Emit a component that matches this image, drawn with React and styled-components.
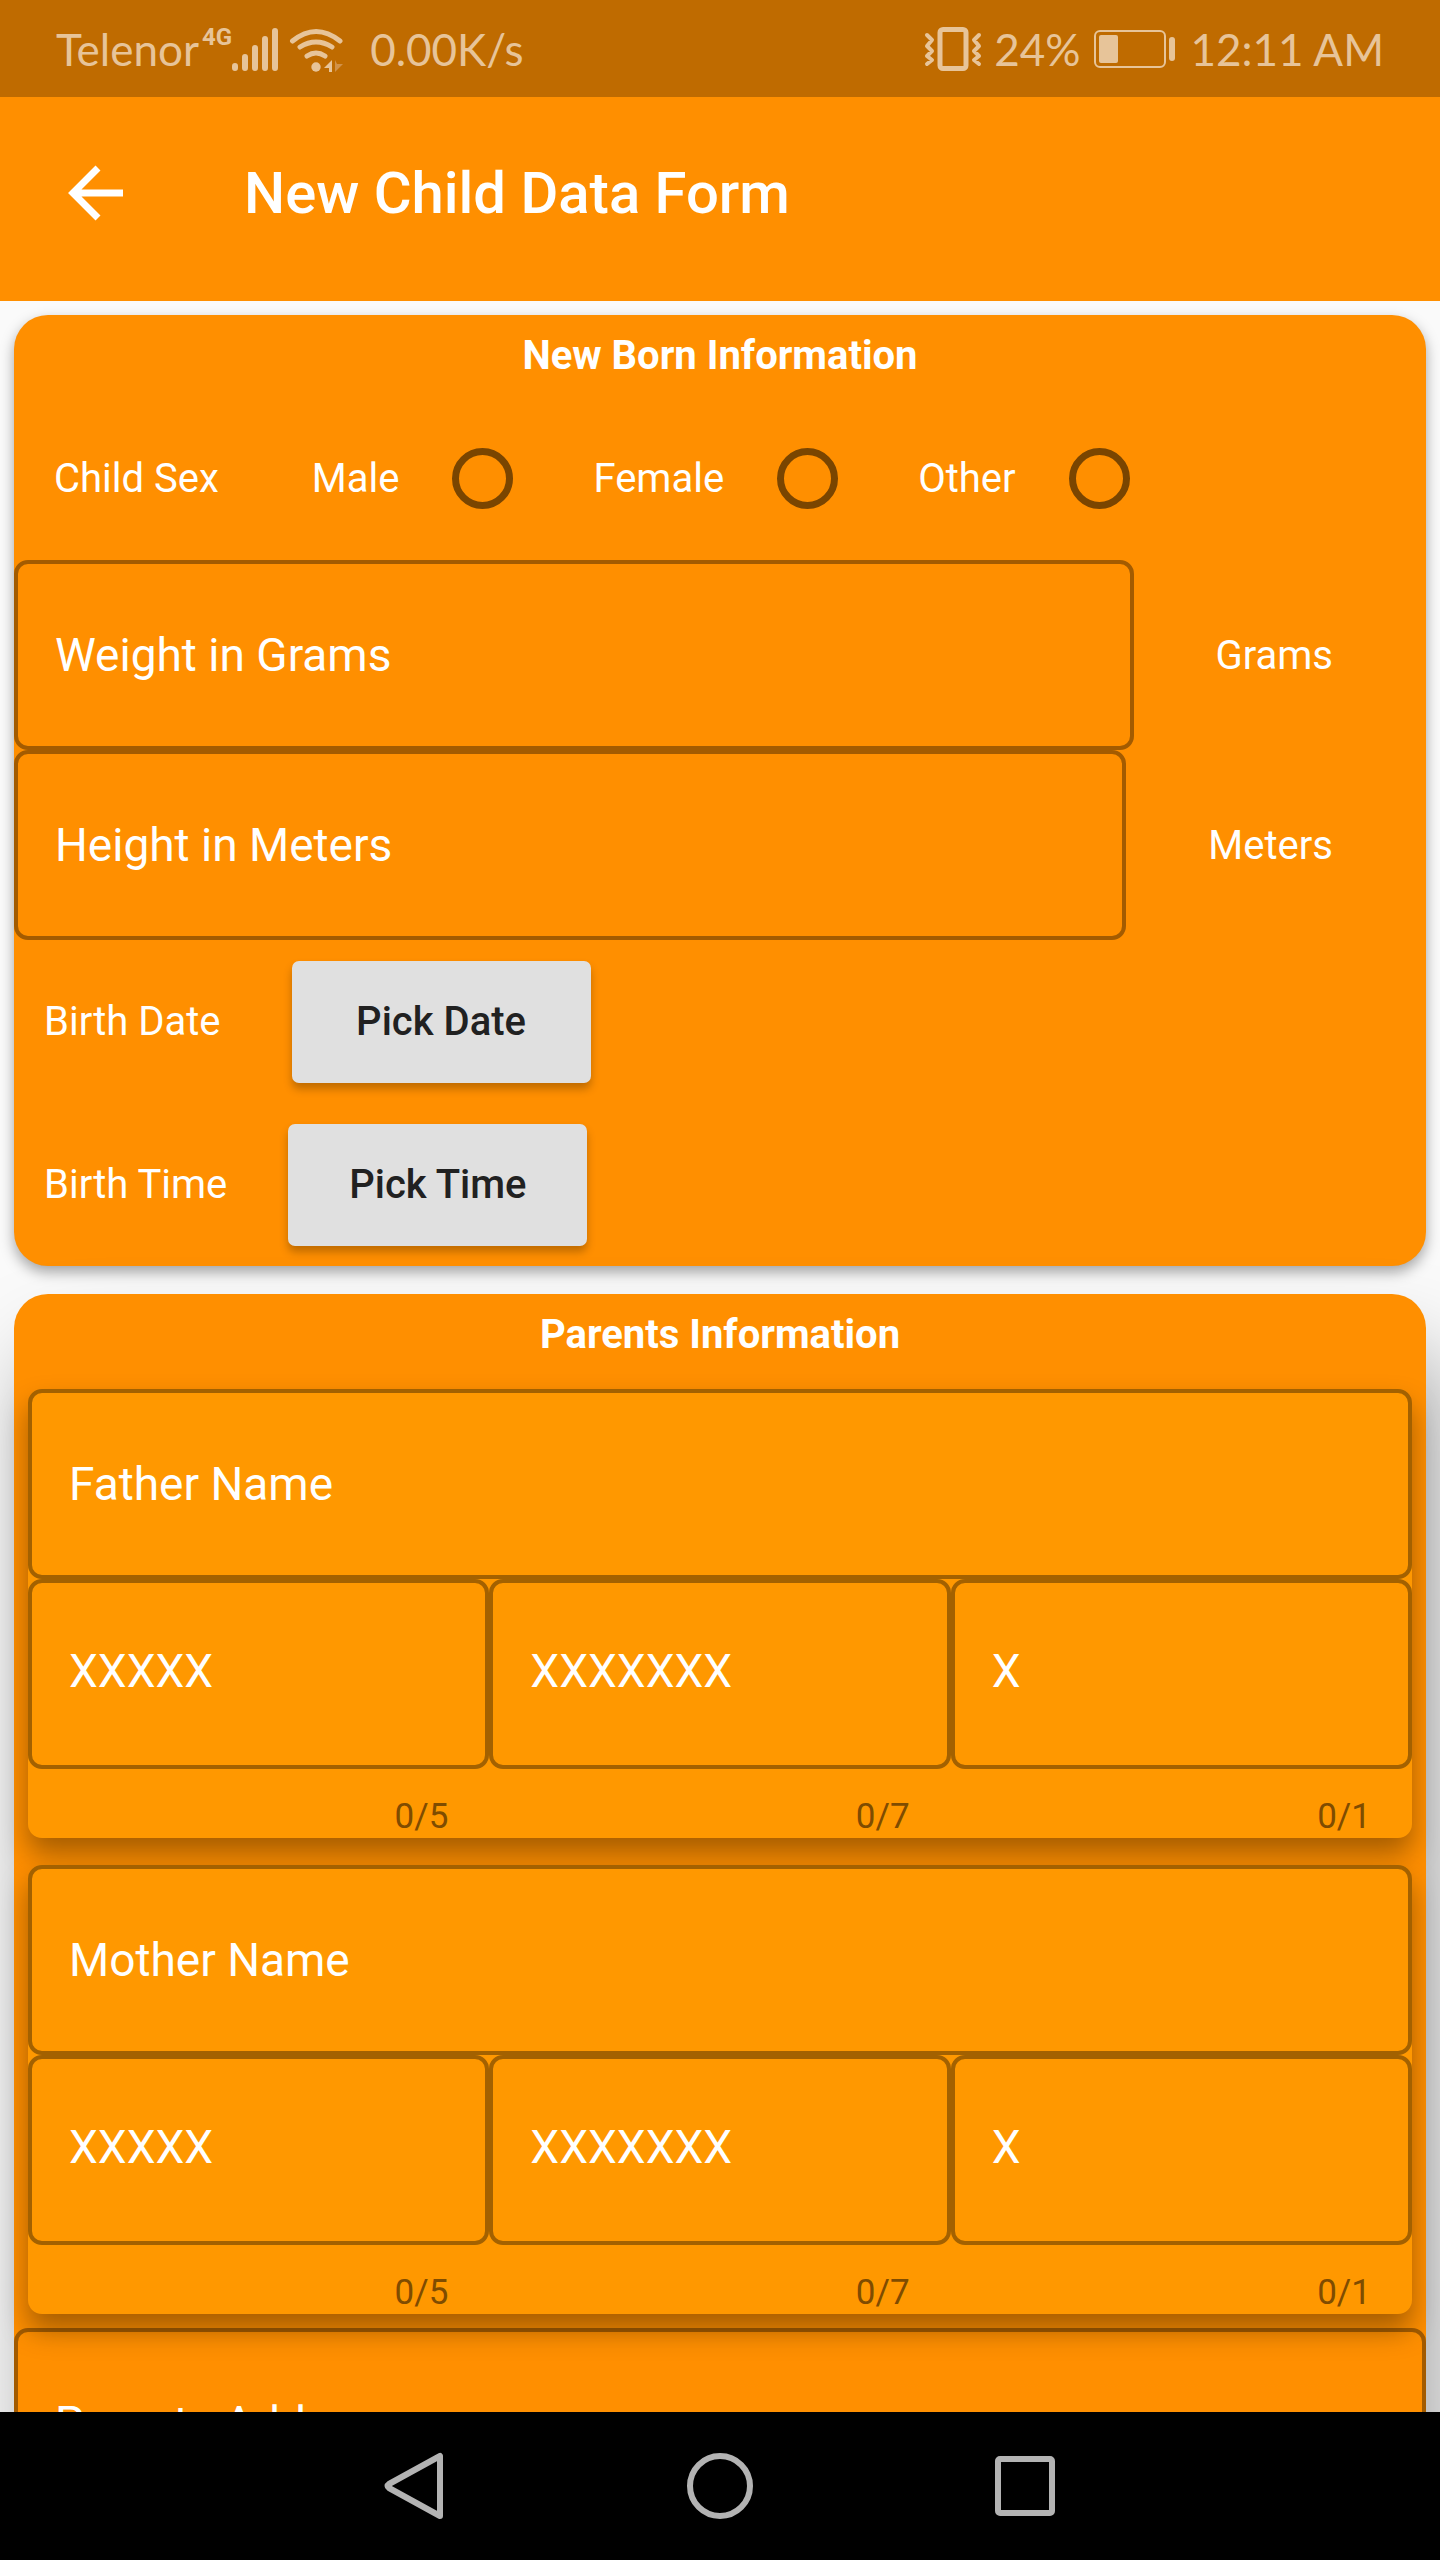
import React from "react"
import styled, { createGlobalStyle } from "styled-components"

const orange = "#ff8f00"
const lightOrange = "#ff9800"

const GlobalStyle = createGlobalStyle`
  * {
    box-sizing: border-box;
  }

  body {
    margin: 0;
    background: #fafafa;
    font-family: Roboto, "Noto Sans", sans-serif;
    color: #fff;
  }
`

const Screen = styled.div`
  height: 100vh;
  display: flex;
  flex-direction: column;
  overflow: hidden;
`

const StatusBar = styled.div`
  height: 97px;
  flex-shrink: 0;
  padding: 0 56px;
  display: flex;
  align-items: center;
  justify-content: space-between;
  background: #bf6b00;
  color: #e7c499;
  font-family: Lato, sans-serif;
  font-size: 44px;
  line-height: 60px;
`

const StatusGroup = styled.div`
  display: flex;
  align-items: center;
`

const StatusIcon = styled.svg`
  display: block;
  margin-left: ${({ $gap }) => $gap || 0}px;
`

const StatusText = styled.span`
  margin-left: ${({ $gap }) => $gap || 0}px;
`

const NetworkType = styled.span`
  align-self: flex-start;
  margin-left: 3px;
  font-family: "Liberation Sans Narrow", Roboto, sans-serif;
  font-size: 24px;
  line-height: 36px;
  font-weight: 700;
`

const AppBar = styled.header`
  height: 204px;
  flex-shrink: 0;
  padding: 0 60px 12px;
  display: flex;
  align-items: center;
  gap: 112px;
  background: ${orange};
`

const BackButton = styled.button`
  padding: 0;
  border: none;
  background: none;
  color: #fff;
`

const PageTitle = styled.h1`
  margin: 0;
  font-size: 58px;
  line-height: 68px;
  font-weight: 500;
`

const Form = styled.form`
  flex: 1;
  min-height: 0;
  overflow: hidden;
  padding: 14px;
  display: flex;
  flex-direction: column;
  gap: 28px;
`

const Card = styled.section`
  flex-shrink: 0;
  border-radius: 34px;
  background: ${orange};
  box-shadow: ${({ $raised }) =>
    $raised
      ? "16px 60px 88px rgba(0, 0, 0, 0.34)"
      : "0 6px 14px rgba(0, 0, 0, 0.35)"};
`

const CardTitle = styled.h2`
  margin: 0;
  padding: 17px 0;
  font-size: 40px;
  line-height: 47px;
  font-weight: 700;
  text-align: center;
`

const RadioRow = styled.div`
  height: 164px;
  padding-left: 40px;
  display: flex;
  align-items: center;
  gap: 27px;
  font-size: 40px;
`

const RowLabel = styled.span`
  margin-right: 66px;
`

const RadioLabel = styled.label`
  display: flex;
  align-items: center;
`

const Radio = styled.input`
  appearance: none;
  width: 61px;
  height: 61px;
  margin: 0 53px;
  border: 7px solid #7a4500;
  border-radius: 50%;
`

const UnitRow = styled.label`
  display: flex;
  align-items: center;
  font-size: 40px;
`

const Unit = styled.span`
  padding: 0 93px 0 82px;
`

const Field = styled.input`
  display: block;
  flex: 1;
  width: 100%;
  min-width: 0;
  height: 190px;
  padding: 0 37px;
  border: 4px solid rgba(0, 0, 0, 0.36);
  border-radius: 14px;
  background: none;
  color: #fff;
  font-family: inherit;
  font-size: 46px;

  &::placeholder {
    color: #fff;
    opacity: 1;
  }
`

const IdField = styled(Field)`
  padding-bottom: 6px;
`

const PickRow = styled.div`
  height: 163px;
  padding-left: 30px;
  display: flex;
  align-items: center;
  gap: ${({ $gap }) => $gap}px;
  font-size: 40px;
`

const PickButton = styled.button`
  width: 299px;
  height: 122px;
  border: none;
  border-radius: 7px;
  background: #e0e0e0;
  box-shadow: 0 6px 8px rgba(0, 0, 0, 0.25);
  color: #212121;
  font-family: inherit;
  font-size: 40px;
  font-weight: 500;
`

const ParentCard = styled.div`
  margin: 0 14px 27px;
  border-radius: 14px;
  background: ${lightOrange};
  box-shadow: 0 16px 28px rgba(0, 0, 0, 0.35);

  &:first-of-type {
    margin-top: 14px;
  }

  &:last-of-type {
    margin-bottom: 14px;
  }
`

const IdRow = styled.div`
  display: grid;
  grid-template-columns: repeat(3, 1fr);
`

const Counter = styled.div`
  height: 69px;
  padding: 27px 41px 0;
  color: #7f4c00;
  font-size: 35px;
  line-height: 41px;
  text-align: right;
`

const NavBar = styled.nav`
  height: 148px;
  flex-shrink: 0;
  display: flex;
  align-items: center;
  justify-content: center;
  gap: 235px;
  background: #000;
`

const NavButton = styled.button`
  width: 70px;
  height: 70px;
  padding: 0;
  border: none;
  background: none;
`

const idParts = ["XXXXX", "XXXXXXX", "X"]

const SignalIcon = () => (
  <StatusIcon width="46" height="46" viewBox="1 0 46 46">
    <path
      d="M4 40v2M14 31v11M24 22v20M34 13v29M44 5v37"
      stroke="#e7c499"
      strokeWidth="6"
      strokeLinecap="round"
    />
  </StatusIcon>
)

const WifiIcon = () => (
  <StatusIcon $gap={11} width="56" height="46" viewBox="0 0 56 46">
    <g fill="none" stroke="#e7c499" strokeWidth="5" strokeLinecap="round">
      <path d="M3.5 15Q27-4 51 15M11 21Q27 11 43 21M18 30Q27 24 36 30" />
    </g>
    <circle cx="27" cy="41" r="4.7" fill="#e7c499" />
    <path d="M35 42l8-8v12h-3v-4z" fill="#e7c499" />
    <path d="M54 38l-8 8V34l2 4z" fill="#d1924a" />
  </StatusIcon>
)

const VibrateIcon = () => (
  <StatusIcon width="58" height="48" viewBox="0 0 58 48">
    <g fill="none" stroke="#e7c499">
      <rect x="16" y="4.5" width="26" height="39" rx="3" strokeWidth="5" />
      <path
        d="M3 10l5 5-5 6 5 5-5 5 5 4-5 4M55 10l-5 5 5 6-5 5 5 5-5 4 5 4"
        strokeWidth="4"
        strokeLinejoin="round"
        strokeLinecap="round"
      />
    </g>
  </StatusIcon>
)

const BatteryIcon = () => (
  <StatusIcon $gap={14} width="82" height="38" viewBox="0 0 82 38">
    <rect
      x="1"
      y="1"
      width="70"
      height="36"
      rx="5"
      fill="none"
      stroke="#e7c499"
      strokeWidth="2"
    />
    <rect x="5" y="5" width="19" height="28" rx="2" fill="#e7c499" />
    <rect x="75" y="7" width="6" height="24" rx="3" fill="#e7c499" />
  </StatusIcon>
)

const Parent = ({ name }) => (
  <ParentCard>
    <Field aria-label={name} placeholder={name} />
    <IdRow>
      {idParts.map(part => (
        <div key={part}>
          <IdField
            aria-label={`${name} ID ${part}`}
            placeholder={part}
            maxLength={part.length}
          />
          <Counter>0/{part.length}</Counter>
        </div>
      ))}
    </IdRow>
  </ParentCard>
)

const App = () => (
  <Screen>
    <GlobalStyle />
    <StatusBar>
      <StatusGroup>
        <StatusText>Telenor</StatusText>
        <NetworkType>4G</NetworkType>
        <SignalIcon />
        <WifiIcon />
        <StatusText $gap={25}>0.00K/s</StatusText>
      </StatusGroup>
      <StatusGroup>
        <VibrateIcon />
        <StatusText $gap={12}>24%</StatusText>
        <BatteryIcon />
        <StatusText $gap={14}>12:11 AM</StatusText>
      </StatusGroup>
    </StatusBar>

    <AppBar>
      <BackButton aria-label="Back">
        <svg width="72" height="72" viewBox="0 0 72 72" display="block">
          <path
            d="M63 36H14M38 11L13 36L38 61"
            fill="none"
            stroke="currentColor"
            strokeWidth="7"
          />
        </svg>
      </BackButton>
      <PageTitle>New Child Data Form</PageTitle>
    </AppBar>

    <Form>
      <Card>
        <CardTitle>New Born Information</CardTitle>
        <RadioRow role="radiogroup" aria-labelledby="child-sex">
          <RowLabel id="child-sex">Child Sex</RowLabel>
          {["Male", "Female", "Other"].map(sex => (
            <RadioLabel key={sex}>
              {sex}
              <Radio type="radio" name="sex" value={sex} />
            </RadioLabel>
          ))}
        </RadioRow>
        <UnitRow>
          <Field placeholder="Weight in Grams" />
          <Unit>Grams</Unit>
        </UnitRow>
        <UnitRow>
          <Field placeholder="Height in Meters" />
          <Unit>Meters</Unit>
        </UnitRow>
        <PickRow $gap={71}>
          <span>Birth Date</span>
          <PickButton type="button">Pick Date</PickButton>
        </PickRow>
        <PickRow $gap={61}>
          <span>Birth Time</span>
          <PickButton type="button">Pick Time</PickButton>
        </PickRow>
      </Card>

      <Card $raised>
        <CardTitle>Parents Information</CardTitle>
        <Parent name="Father Name" />
        <Parent name="Mother Name" />
        <Field aria-label="Parents Address" placeholder="Parents Address" />
      </Card>
    </Form>

    <NavBar>
      <NavButton aria-label="Back">
        <svg width="70" height="70" viewBox="0 0 70 70">
          <path
            d="M60 5v60L9 37q-3-2 0-4z"
            fill="none"
            stroke="#b3b3b3"
            strokeWidth="6"
            strokeLinejoin="round"
          />
        </svg>
      </NavButton>
      <NavButton aria-label="Home">
        <svg width="70" height="70" viewBox="0 0 70 70">
          <circle
            cx="35"
            cy="35"
            r="30"
            fill="none"
            stroke="#b3b3b3"
            strokeWidth="6"
          />
        </svg>
      </NavButton>
      <NavButton aria-label="Recent apps">
        <svg width="70" height="70" viewBox="0 0 70 70">
          <rect
            x="8"
            y="8"
            width="54"
            height="54"
            rx="2"
            fill="none"
            stroke="#b3b3b3"
            strokeWidth="6"
          />
        </svg>
      </NavButton>
    </NavBar>
  </Screen>
)

export default App
